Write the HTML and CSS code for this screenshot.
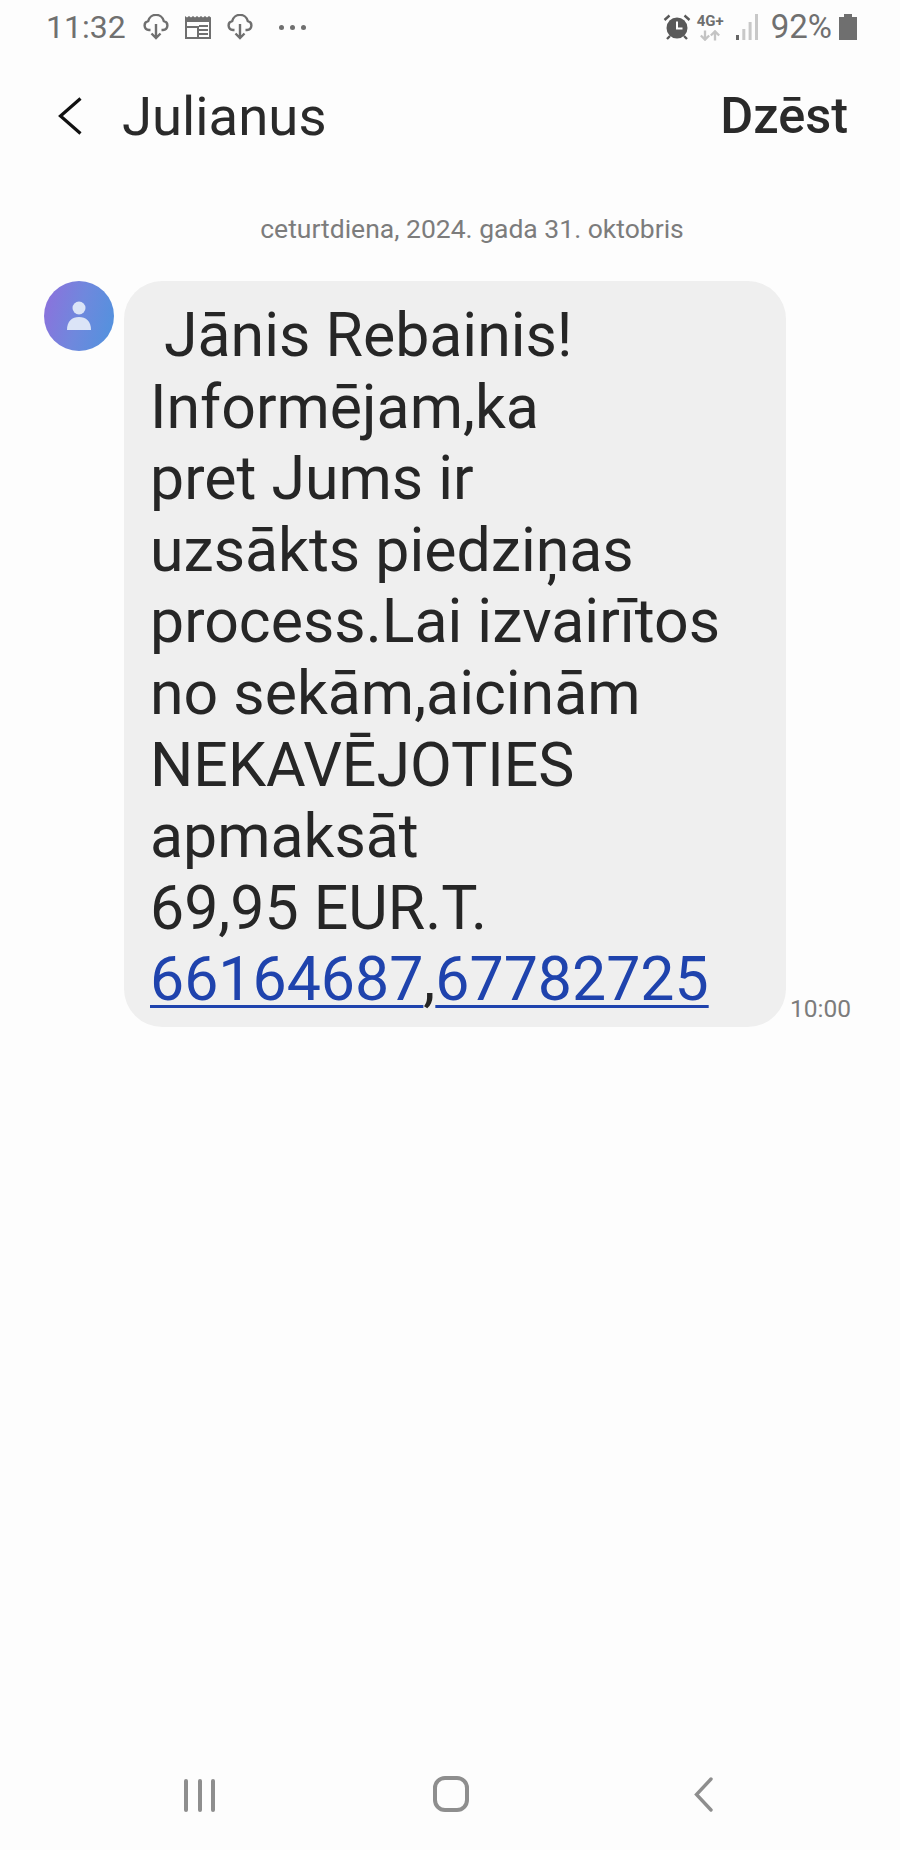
FILE: index.html
```html
<!DOCTYPE html>
<html lang="lv">
<head>
<meta charset="utf-8">
<title>Julianus</title>
<link rel="stylesheet" href="styles.css">
</head>
<body>
<div class="screen">
  <div class="status">
    <div class="status-left">
      <span class="clock">11:32</span>
      <svg class="si cloud" viewBox="0 0 26 26"><path d="M7.500 16H6a4.500 4.500 0 0 1-.8-8.900 8 8 0 0 1 15.600 0A4.500 4.500 0 0 1 20 16h-1.500" fill="none" stroke="#6f6f6f" stroke-width="2.400"/><path d="M13 10v14M8.500 19.500l4.500 4.500 4.500-4.500" fill="none" stroke="#6f6f6f" stroke-width="2.400"/></svg>
      <svg class="si cal" viewBox="0 0 26 26"><path d="M0 2l2 1.500 2-1.500 2 1.500 2-1.500 2 1.500 2-1.500 2 1.500 2-1.500 2 1.500 2-1.500 2 1.500 2-1.500 2 1.500V8H0z" fill="#6f6f6f"/><path d="M1 7h24v17H1z" fill="none" stroke="#6f6f6f" stroke-width="2"/><path d="M14 12h9M14 16h9M14 20h9M2 13h11M13 12v11" stroke="#6f6f6f" stroke-width="2"/></svg>
      <svg class="si cloud cloud2" viewBox="0 0 26 26"><path d="M7.500 16H6a4.500 4.500 0 0 1-.8-8.900 8 8 0 0 1 15.600 0A4.500 4.500 0 0 1 20 16h-1.500" fill="none" stroke="#6f6f6f" stroke-width="2.400"/><path d="M13 10v14M8.500 19.500l4.500 4.500 4.500-4.500" fill="none" stroke="#6f6f6f" stroke-width="2.400"/></svg>
      <span class="dots"><i></i><i></i><i></i></span>
    </div>
    <div class="status-right">
      <svg class="alarm" viewBox="0 0 28 26"><circle cx="14" cy="14" r="10.500" fill="#595959"/><path d="M14 7.500v7h5.500" fill="none" stroke="#fff" stroke-width="2"/><path d="M1.500 6l5-4.500M26.500 6l-5-4.500M4 25l3-3M24 25l-3-3" stroke="#595959" stroke-width="2.400"/></svg>
      <span class="net"><span class="net-label">4G+</span><svg class="net-arrows" viewBox="0 0 24 12"><path d="M6 0v11M1 6l5 5 5-5" fill="none" stroke="#c4c4c4" stroke-width="2.800"/><path d="M18 12V1M13 6l5-5 5 5" fill="none" stroke="#c4c4c4" stroke-width="2.800"/></svg></span>
      <svg class="signal" viewBox="0 0 22 26"><rect x="0" y="21" width="3" height="5" fill="#666"/><rect x="6.300" y="15" width="3" height="11" fill="#c8c8c8"/><rect x="12.600" y="8" width="3" height="18" fill="#c8c8c8"/><rect x="19" y="0" width="3" height="26" fill="#c8c8c8"/></svg>
      <span class="pct">92%</span>
      <svg class="battery" viewBox="0 0 18 26"><path d="M5 0h8v3h5v23H0V3h5z" fill="#6f6f6f"/></svg>
    </div>
  </div>

  <header class="topbar">
    <div class="title-group">
      <svg class="back" viewBox="0 0 24 38"><path d="M22.500 1.500L2.500 19l20 17.500" fill="none" stroke="#111" stroke-width="3.200"/></svg>
      <span class="title">Julianus</span>
    </div>
    <span class="action">Dzēst</span>
  </header>

  <main class="thread">
    <div class="date">ceturtdiena, 2024. gada 31. oktobris</div>
    <div class="msg">
      <div class="avatar">
        <svg class="person" viewBox="0 0 24 30"><circle cx="12" cy="7" r="6.500" fill="#dbe4f7"/><path d="M0 29c0-9 5-13 12-13s12 4 12 13z" fill="#dbe4f7"/></svg>
      </div>
      <div class="bubble"><span class="lead">Jānis Rebainis!</span><br>Informējam,ka<br>pret Jums ir<br>uzsākts piedziņas<br>process.Lai izvairītos<br>no sekām,aicinām<br>NEKAVĒJOTIES<br>apmaksāt<br>69,95 EUR.T.<br><a class="link">66164687</a>,<a class="link">67782725</a></div>
      <time class="time">10:00</time>
    </div>
  </main>

  <nav class="navbar">
    <span class="recents"><i></i><i></i><i></i></span>
    <span class="home"></span>
    <svg class="nav-back" viewBox="0 0 19 35"><path d="M17 2L2.500 17.500 17 33" fill="none" stroke="#8e8e8e" stroke-width="3.400" stroke-linecap="round"/></svg>
  </nav>
</div>
</body>
</html>
```
FILE: styles.css
```css
* { box-sizing: border-box; }
html, body { margin: 0; padding: 0; background: #fdfdfd; }
body { font-family: Roboto, "Noto Sans", sans-serif; color: #262626; }
.screen { width: 900px; height: 1850px; display: flex; flex-direction: column; overflow: hidden; }

.status { height: 56px; padding: 14px 43px 0 46px; display: flex; justify-content: space-between; align-items: flex-start; color: #6f6f6f; }
.status-left, .status-right { display: flex; align-items: center; height: 26px; }
.clock { font-size: 32px; line-height: 26px; color: #707070; margin-right: 17px; }
.si { width: 26px; height: 26px; }
.cal { margin-left: 16px; }
.cloud2 { margin-left: 16px; }
.dots { display: flex; gap: 6px; margin-left: 26px; }
.dots i { width: 5px; height: 5px; border-radius: 50%; background: #6f6f6f; }
.alarm { width: 28px; height: 26px; }
.net { display: flex; flex-direction: column; align-items: center; margin-left: 6px; width: 27px; }
.net-label { font-size: 15px; font-weight: 700; line-height: 14px; color: #6f6f6f; white-space: nowrap; }
.net-arrows { width: 20px; height: 11px; margin-top: 2px; }
.signal { width: 22px; height: 26px; margin-left: 12px; }
.pct { font-size: 33px; line-height: 26px; color: #707070; margin-left: 13px; }
.battery { width: 18px; height: 26px; margin-left: 7px; }

.topbar { height: 114px; padding: 5px 52px 0 58px; display: flex; justify-content: space-between; align-items: center; }
.title-group { display: flex; align-items: center; gap: 40px; }
.back { width: 24px; height: 38px; }
.title { font-size: 54.500px; color: #2a2a2a; }
.action { font-size: 50.500px; font-weight: 500; color: #2a2a2a; }

.thread { flex: 1; padding: 44px 0 0 44px; }
.date { width: 856px; text-align: center; font-size: 26.500px; line-height: 30px; color: #7c7c7c; }
.msg { display: flex; align-items: flex-end; margin-top: 37px; }
.avatar { align-self: flex-start; width: 70px; height: 70px; border-radius: 50%; background: linear-gradient(105deg, #8f6fdc 0%, #6f88dd 50%, #4f93de 100%); display: flex; align-items: center; justify-content: center; }
.person { width: 24px; height: 30px; }
.bubble { width: 662px; margin-left: 10px; padding: 19px 20px 11px 26px; background: #efefef; border-radius: 38px; font-size: 60.800px; line-height: 71.600px; color: #262626; }
.lead { margin-left: 14px; }
.link { color: #1f43ad; text-decoration: underline; text-decoration-thickness: 3px; text-underline-offset: 5px; }
.time { font-size: 24.500px; color: #7c7c7c; margin-left: 4px; margin-bottom: 4px; }

.navbar { height: 116px; display: flex; align-items: flex-end; padding: 0 0 38px 184px; }
.recents { display: flex; justify-content: space-between; height: 33px; width: 31px; }
.recents i { width: 4px; background: #8e8e8e; border-radius: 2px; }
.home { width: 36px; height: 36px; border: 4px solid #8e8e8e; border-radius: 12px; margin-left: 218px; }
.nav-back { width: 19px; height: 35px; margin-left: 225px; }
```
